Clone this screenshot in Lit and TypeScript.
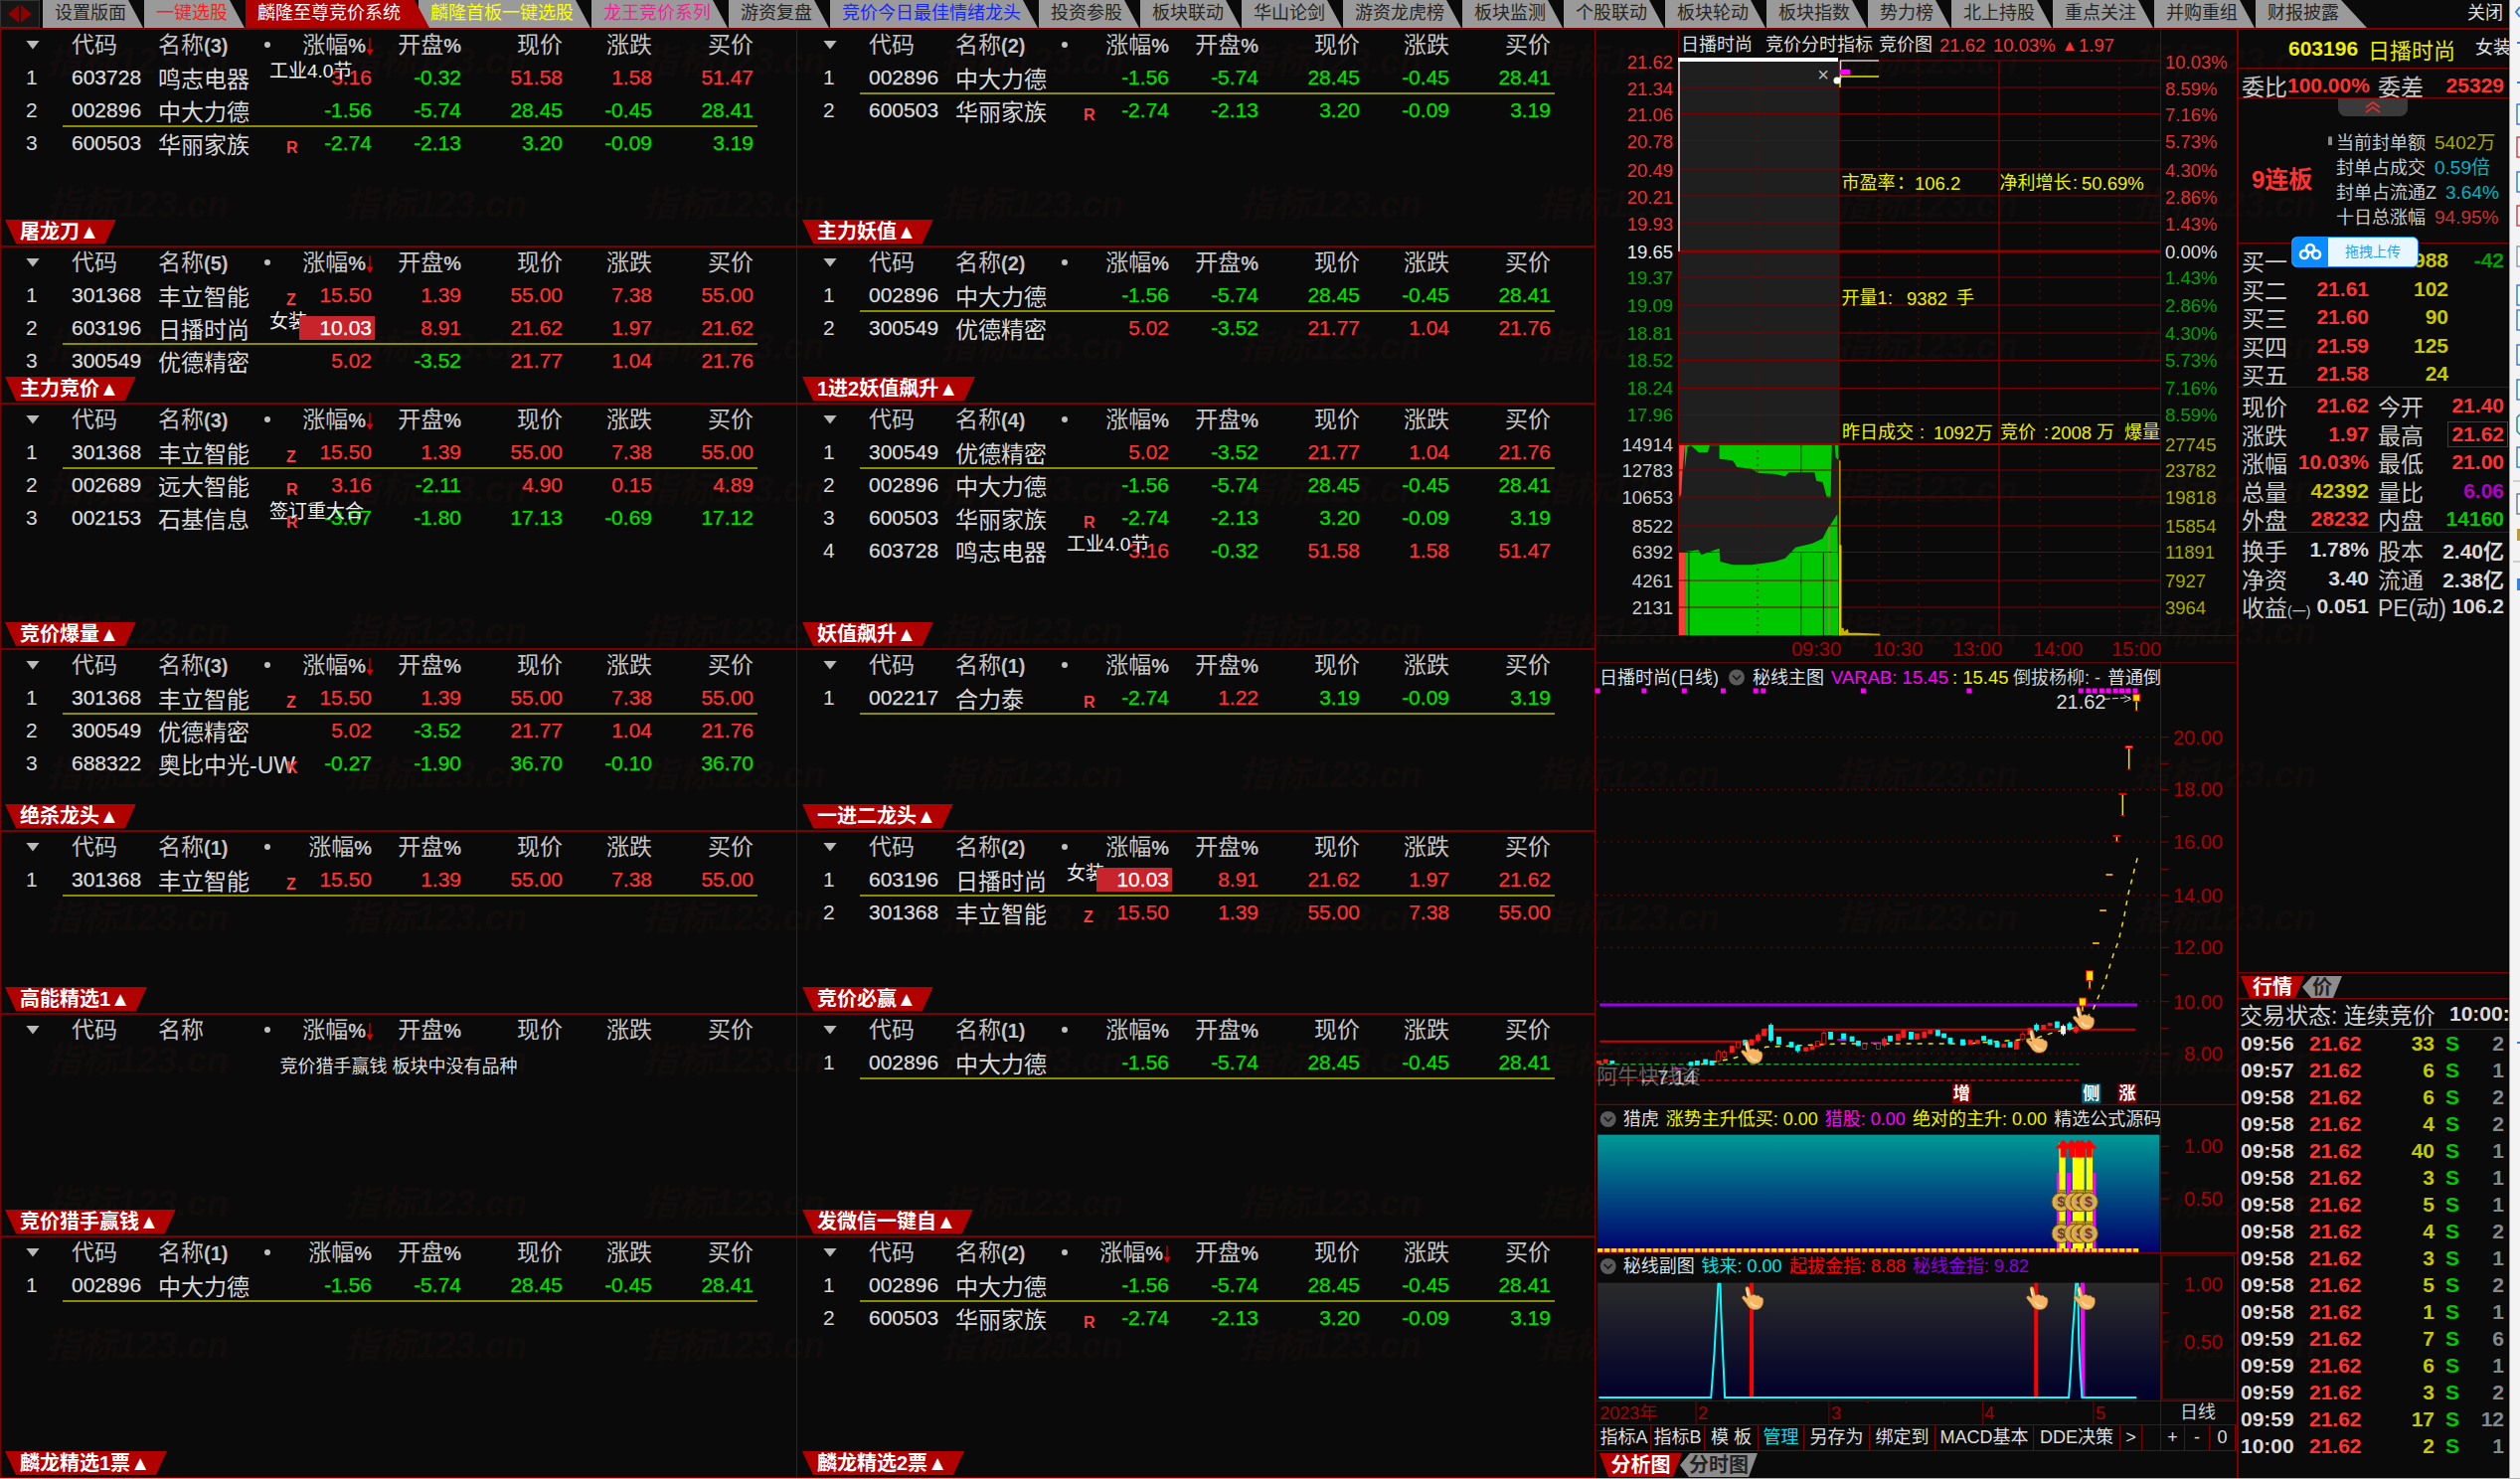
import { LitElement, css, html, svg } from 'lit';
import { customElement } from 'lit/decorators.js';

interface Stock {
  code: string;
  name: string;
  pct: string;
  open: string;
  price: string;
  chg: string;
  buy: string;
  flag?: string;
  over?: string;
  hot?: boolean;
}

const s = (code: string, name: string, pct: string, open: string, price: string, chg: string, buy: string, extra: Partial<Stock> = {}): Stock =>
  ({ code, name, pct, open, price, chg, buy, ...extra });

const MZ = s('603728', '鸣志电器', '3.16', '-0.32', '51.58', '1.58', '51.47', { over: '工业4.0节' });
const ZD = s('002896', '中大力德', '-1.56', '-5.74', '28.45', '-0.45', '28.41');
const HL = s('600503', '华丽家族', '-2.74', '-2.13', '3.20', '-0.09', '3.19', { flag: 'R' });
const FL = s('301368', '丰立智能', '15.50', '1.39', '55.00', '7.38', '55.00', { flag: 'Z' });
const RB = s('603196', '日播时尚', '10.03', '8.91', '21.62', '1.97', '21.62', { over: '女装', hot: true });
const YD = s('300549', '优德精密', '5.02', '-3.52', '21.77', '1.04', '21.76');
const YDA = s('002689', '远大智能', '3.16', '-2.11', '4.90', '0.15', '4.89', { flag: 'R' });
const SJ = s('002153', '石基信息', '-3.07', '-1.80', '17.13', '-0.69', '17.12', { flag: 'R', over: '签订重大合' });
const AB = s('688322', '奥比中光-UW', '-0.27', '-1.90', '36.70', '-0.10', '36.70', { flag: 'K' });
const HLT = s('002217', '合力泰', '-2.74', '1.22', '3.19', '-0.09', '3.19', { flag: 'R' });

interface Panel {
  title: string;
  count: string;
  arrow: boolean;
  rows: Stock[];
  mark: number;
  msg?: string;
}

// left and right column alternate, row by row
const PANELS: Panel[] = [
  { title: '屠龙刀', count: '(3)', arrow: true, rows: [MZ, ZD, HL], mark: 1 },
  { title: '主力妖值', count: '(2)', arrow: false, rows: [ZD, HL], mark: 0 },
  { title: '主力竞价', count: '(5)', arrow: true, rows: [FL, RB, YD], mark: 1 },
  { title: '1进2妖值飙升', count: '(2)', arrow: false, rows: [ZD, YD], mark: 0 },
  { title: '竞价爆量', count: '(3)', arrow: true, rows: [FL, YDA, SJ], mark: 0 },
  { title: '妖值飙升', count: '(4)', arrow: false, rows: [YD, ZD, HL, MZ], mark: 0 },
  { title: '绝杀龙头', count: '(3)', arrow: true, rows: [FL, YD, AB], mark: 0 },
  { title: '一进二龙头', count: '(1)', arrow: false, rows: [HLT], mark: 0 },
  { title: '高能精选1', count: '(1)', arrow: false, rows: [FL], mark: 0 },
  { title: '竞价必赢', count: '(2)', arrow: false, rows: [RB, FL], mark: 0 },
  { title: '竞价猎手赢钱', count: '', arrow: true, rows: [], mark: -1, msg: '竞价猎手赢钱 板块中没有品种' },
  { title: '发微信一键自', count: '(1)', arrow: false, rows: [ZD], mark: 0 },
  { title: '麟龙精选1票', count: '(1)', arrow: false, rows: [ZD], mark: 0 },
  { title: '麟龙精选2票', count: '(2)', arrow: true, rows: [ZD, HL], mark: 0 },
];

const TABS: [string, string][] = [
  ['设置版面', ''], ['一键选股', 'red'], ['麟隆至尊竞价系统', 'on'], ['麟隆首板一键选股', 'yel'], ['龙王竞价系列', 'pink'],
  ['游资复盘', ''], ['竞价今日最佳情绪龙头', 'blue'], ['投资参股', ''], ['板块联动', ''], ['华山论剑', ''], ['游资龙虎榜', ''],
  ['板块监测', ''], ['个股联动', ''], ['板块轮动', ''], ['板块指数', ''], ['势力榜', ''], ['北上持股', ''], ['重点关注', ''],
  ['并购重组', ''], ['财报披露', 'last'],
];

const R = '#ff3232';
const G = '#00a000';
const Y = '#f0f000';
const GRID = '#7c0000';
const AXR = '#a80000';

const ln = (x1: number, y1: number, x2: number, y2: number, c = GRID, w = 1, dash = '') =>
  svg`<line x1=${x1} y1=${y1} x2=${x2} y2=${y2} stroke=${c} stroke-width=${w} stroke-dasharray=${dash}></line>`;
const tx = (x: number, y: number, t: string, fill = '#ccc', anchor = 'start', size = 18.5, weight = 400) =>
  svg`<text x=${x} y=${y} fill=${fill} text-anchor=${anchor} font-size=${size} font-weight=${weight} dominant-baseline="central">${t}</text>`;

const chevron = (x: number, y: number) => svg`
  <circle cx=${x} cy=${y} r="8" fill="#5a5a5a"></circle>
  <path d="M${x - 4} ${y - 2}l4 4l4 -4" fill="none" stroke="#161616" stroke-width="1.6"></path>`;

const hand = (x: number, y: number) => svg`
  <g transform="translate(${x} ${y})">
    <path d="M-7 -10C-7.5 -13 -3.5 -13 -3 -10L-1.5 -3.5C1.5 -5 3 -4 4 -3C6 -4 7 -3 8 -1.500C10 -2 11 0 11 2C11 7 8 11 3 11C-1 11 -4 9 -6 5L-10 0C-11.500 -2 -9 -4 -7 -2L-5 -0.500Z"
      fill="#f5b562" stroke="#8a5a1c" stroke-width="0.6"></path>
    <path d="M-6 -10L-4.500 -3" stroke="#fff2d8" stroke-width="1.4"></path>
    <path d="M-2 3C0 7 3 8 6 7" fill="none" stroke="#fbd9a4" stroke-width="2"></path>
  </g>`;

const bag = (x: number, y: number) => svg`
  <g transform="translate(${x} ${y})">
    <path d="M-4 -11L4 -11L2 -6L-2 -6Z" fill="#c89a30" stroke="#6b5212" stroke-width="0.7"></path>
    <circle cx="0" cy="1" r="9.500" fill="#e0b040" stroke="#6b5212" stroke-width="1"></circle>
    <circle cx="0" cy="1" r="6" fill="#c8a078"></circle>
    ${tx(0, 1, '$', '#6b3a20', 'middle', 14, 700)}
  </g>`;

const rocket = (x: number) => svg`
  <path d="M${x} 1146.500l8 9h-5v9h-6v-9h-5z" fill="#ff0000"></path>`;

// zoom-read coordinates of the candle row in the daily chart
const CANDLES: [number, number, number, string][] = [
  [20, 1222, 1230, 'r'], [36, 1218, 1228, 'r'], [52, 1222, 1230, 'c'], [240, 1226, 1236, 'c'], [255, 1222, 1234, 'c'], [275, 1218, 1232, 'c'],
  [290, 1222, 1234, 'c'], [306, 1188, 1228, 'h'], [320, 1190, 1216, 'h'], [338, 1178, 1196, 'r'], [353, 1165, 1182, 'h'], [370, 1160, 1174, 'c'],
  [385, 1158, 1174, 'r'], [400, 1138, 1166, 'r'], [415, 1126, 1146, 'r'], [431, 1108, 1166, 'C'], [450, 1150, 1172, 'c'], [480, 1166, 1180, 'c'],
  [495, 1172, 1197, 'c'], [515, 1182, 1192, 'r'], [530, 1178, 1188, 'r'], [543, 1163, 1178, 'h'], [558, 1132, 1176, 'h'], [574, 1135, 1156, 'c'],
  [605, 1140, 1160, 'C'], [625, 1149, 1163, 'c'], [640, 1162, 1176, 'c'], [655, 1170, 1186, 'h'], [688, 1168, 1186, 'h'], [702, 1150, 1180, 'r'],
  [716, 1147, 1162, 'c'], [735, 1142, 1160, 'r'], [748, 1130, 1152, 'r'], [766, 1135, 1156, 'C'], [780, 1140, 1156, 'r'], [798, 1135, 1152, 'r'],
  [812, 1130, 1140, 'r'], [830, 1130, 1146, 'c'], [845, 1140, 1152, 'c'], [860, 1153, 1170, 'c'], [890, 1158, 1174, 'c'], [908, 1160, 1172, 'r'],
  [925, 1160, 1170, 'r'], [940, 1148, 1160, 'c'], [955, 1158, 1172, 'c'], [972, 1166, 1180, 'c'], [988, 1172, 1180, 'r'], [1003, 1166, 1180, 'c'],
  [1018, 1163, 1186, 'r'], [1033, 1135, 1162, 'h'], [1050, 1124, 1142, 'r'], [1066, 1108, 1134, 'c'], [1083, 1114, 1126, 'r'], [1098, 1108, 1116, 'r'],
  [1115, 1104, 1122, 'c'], [1130, 1112, 1146, 'w'], [1145, 1104, 1132, 'c'], [1160, 1114, 1140, 'r'],
];

const kx = (z: number) => 1600 + z / 2.376;
const ky = (z: number) => 660 + z / 3;
const lx = (z: number) => 1600 + z / 2.376;
const ly = (z: number) => 1110 + z / 3;

const candle = ([x, top, bot, kind]: [number, number, number, string]) => {
  const px = kx(x);
  const t = ky(top);
  const b = ky(bot);
  const col = kind === 'c' || kind === 'C' ? '#00ffff' : kind === 'w' ? '#dff' : '#ff1a1a';
  const inset = (b - t) > 8 ? 2 : 0;
  return svg`
    ${ln(px, t, px, b, col, 1)}
    <rect x=${px - 2} y=${t + inset} width="4" height=${b - t - inset * 2} fill=${kind === 'h' ? '#0a0a0a' : col} stroke=${col} stroke-width="0.8"></rect>`;
};

const yBar = (x: number, top: number, bot: number, body: number) => svg`
  ${ln(kx(x), ky(top), kx(x), ky(bot), '#ffe000', 1.5)}
  <rect x=${kx(x) - 3.5} y=${ky(top)} width="7" height=${body} fill="#ffe000" stroke="#e00000" stroke-width="1"></rect>
  ${ln(kx(x) - 2, ky(bot), kx(x) + 2, ky(bot), '#e00000', 1)}`;

const pts = (arr: number[][], fx: (n: number) => number, fy: (n: number) => number) =>
  arr.map(([x, y]) => `${fx(x).toFixed(1)},${fy(y).toFixed(1)}`).join(' ');

const ix = (z: number) => 1600 + z / 2.376;
const iy = (z: number) => 360 + z / 3;

function intraday() {
  const upper: [number, string, string][] = [
    [61, '21.62', '10.03%'], [88, '21.34', '8.59%'], [114.5, '21.06', '7.16%'], [141.5, '20.78', '5.73%'],
    [170, '20.49', '4.30%'], [197, '20.21', '2.86%'], [224, '19.93', '1.43%'],
  ];
  const lower: [number, string, string][] = [
    [279, '19.37', '1.43%'], [307, '19.09', '2.86%'], [335, '18.81', '4.30%'], [362.5, '18.52', '5.73%'], [390.5, '18.24', '7.16%'], [417.5, '17.96', '8.59%'],
  ];
  const vols: [number, string, string][] = [
    [473, '12783', '23782'], [500, '10653', '19818'], [529, '8522', '15854'], [555.5, '6392', '11891'], [584, '4261', '7927'], [611, '2131', '3964'],
  ];
  const greenTop = [[226, 258], [592, 258], [593, 310], [586, 300], [584, 265], [577, 262], [574, 422], [565, 422], [555, 375], [540, 372], [535, 345], [475, 345], [465, 358], [440, 350], [400, 348], [385, 335], [350, 330], [340, 310], [308, 305], [308, 265], [285, 265], [280, 285], [258, 285], [240, 265], [232, 268], [225, 340]];
  const greenBot = [[226, 585], [258, 580], [265, 595], [285, 585], [308, 575], [310, 615], [340, 625], [385, 625], [440, 615], [465, 605], [490, 572], [530, 560], [555, 545], [565, 520], [590, 472], [594, 838], [226, 838]];
  return html`<svg class="pane" width="646" height="637" viewBox="1604 30 646 637">
    <rect x="1688" y="61" width="162" height="578" fill="#1f1f1f"></rect>
    <polygon points=${pts(greenTop, ix, iy)} fill="#00c800"></polygon>
    <polygon points=${pts(greenBot, ix, iy)} fill="#00c800"></polygon>
    <polygon points=${pts([[212, 258], [226, 258], [220, 340], [217, 410], [212, 425]], ix, iy)} fill="#ff3c3c"></polygon>
    <rect x="1689" y="556" width="6" height="83" fill="#ff3c3c"></rect>
    ${[235, 503, 557].map((x) => ln(ix(x), iy(585), ix(x), iy(838), '#0a3a0a', 1.2))}
    ${ln(ix(503), iy(258), ix(503), iy(345), '#0a3a0a', 1.2)}
    ${ln(ix(570), iy(510), ix(570), iy(838), '#d86060', 1.2)}
    ${ln(1604.5, 30, 1604.5, 667)}
    ${ln(1688.5, 30, 1688.5, 639)}
    ${ln(2173.5, 30, 2173.5, 639)}
    ${ln(1850, 61, 1850, 639)}
    ${ln(2011, 61, 2011, 639, GRID, 1.5)}
    ${[1768, 1890, 1930, 2052, 2132].map((x) => ln(x, 61, x, 639, GRID, 1, '2 5'))}
    ${[...upper, ...lower, ...vols].map(([y]) => ln(1688, y, 2173, y))}
    ${ln(1688, 253, 2173, 253, '#8c0000', 3)}
    ${ln(1688, 447, 2173, 447, '#a00000', 2)}
    ${ln(1604, 639.5, 2250, 639.5)}
    ${ln(1604, 667, 2250, 667, GRID, 1.5)}
    ${ln(ix(596), iy(310), ix(596), iy(838), '#c8a000', 1.5)}
    ${ln(ix(597), iy(565), ix(597), iy(838), '#e0c800', 2.5)}
    <polygon points=${pts([[597, 838], [597, 815], [605, 815], [606, 826], [615, 818], [617, 830], [640, 830], [692, 833], [692, 838]], ix, iy)} fill="#c8b400"></polygon>

    ${ln(1689, 253, 1689, 60, '#e8e8e8', 1.5)}
    ${ln(1688, 60, 1849, 60, '#fff', 4)}
    ${ln(1851.5, 61, 1851.5, 80, '#ddd', 1.5)}
    ${ln(1851, 61, 1890, 61, '#ccc', 1.5)}
    <rect x="1851" y="70" width="10" height="5" fill="#ff00ff"></rect>
    ${ln(1851, 77, 1890, 77, '#e6e600', 1.5)}
    ${ln(1851, 77, 1851, 88, '#e6e600', 1.5)}
    <circle cx="1848" cy="81" r="3.500" fill="#fff"></circle>
    ${tx(1834, 75, '×', '#bbb', 'middle', 20)}

    ${tx(1691, 45, '日播时尚', '#ddd', 'start', 18)}
    ${tx(1776, 45, '竞价分时指标', '#ddd', 'start', 18)}
    ${tx(1890, 45, '竞价图', '#ddd', 'start', 18)}
    ${tx(1951, 45, '21.62', R)}
    ${tx(2005, 45, '10.03%', R)}
    ${tx(2074, 45, '▲', R, 'start', 16)}
    ${tx(2091, 45, '1.97', R)}

    ${upper.map(([y, a, b]) => svg`${tx(1683, y + 1, a, '#e83232', 'end')}${tx(2178, y + 1, b, '#e03030')}`)}
    ${tx(1683, 253, '19.65', '#e8e8e8', 'end')}
    ${tx(2178, 253, '0.00%', '#ddd')}
    ${lower.map(([y, a, b]) => svg`${tx(1683, y, a, G, 'end')}${tx(2178, y, b, G)}`)}
    ${tx(1683, 447, '14914', '#ccc', 'end')}
    ${tx(2178, 447, '27745', '#a8a800')}
    ${vols.map(([y, a, b]) => svg`${tx(1683, y, a, '#ccc', 'end')}${tx(2178, y, b, '#a8a800')}`)}

    ${tx(1852.5, 184, '市盈率', Y, 'start', 18)}
    ${tx(1908, 184, '：', Y, 'start', 18)}
    ${tx(1926, 184, '106.2', Y)}
    ${tx(2011.5, 184, '净利增长', Y, 'start', 18)}
    ${tx(2085, 184, ':', Y, 'start', 18)}
    ${tx(2094, 184, '50.69%', Y)}
    ${tx(1852.5, 300, '开量1', Y, 'start', 18)}
    ${tx(1899, 300, ':', Y, 'start', 18)}
    ${tx(1918, 300, '9382', Y)}
    ${tx(1968, 300, '手', Y, 'start', 18)}
    ${tx(1853, 435, '昨日成交', Y, 'start', 18)}
    ${tx(1931, 435, ':', Y, 'start', 18)}
    ${tx(1945, 435, '1092万', Y)}
    ${tx(2012, 435, '竞价', Y, 'start', 18)}
    ${tx(2056, 435, ':', Y, 'start', 18)}
    ${tx(2063, 435, '2008', Y)}
    ${tx(2109, 435, '万', Y, 'start', 18)}
    ${tx(2137, 435, '爆量', Y, 'start', 18)}

    ${[['09:30', 1802], ['10:30', 1884], ['13:00', 1964], ['14:00', 2045], ['15:00', 2124]].map(([t, x]) => tx(x as number, 652.5, t as string, '#a80000', 'start', 20))}
  </svg>`;
}

function daily() {
  const grid: [number, string][] = [[245, '20.00'], [403, '18.00'], [561, '16.00'], [722, '14.00'], [880, '12.00'], [1043, '10.00'], [1200, '8.00']];
  const ticks = [245, 325, 403, 485, 561, 643, 722, 803, 880, 962, 1043, 1123, 1200];
  const squares = [17, 128, 224, 317, 395, 413, 652, 905, 1172, 1190, 1205, 1222, 1238, 1255, 1270, 1285, 1302];
  const curve = [[1307, 610], [1295, 670], [1285, 720], [1275, 790], [1262, 860], [1250, 900], [1240, 940], [1228, 990], [1215, 1025], [1200, 1070], [1165, 1120], [1110, 1135], [1060, 1155], [900, 1170], [600, 1170], [420, 1180], [340, 1215], [250, 1235]];
  return html`<svg class="pane" width="646" height="445" viewBox="1604 667 646 445">
    <defs><clipPath id="kc"><rect x="1604" y="667" width="569" height="445"></rect></clipPath></defs>
    ${ln(1604.5, 667, 1604.5, 1112)}
    ${ln(2173.5, 667, 2173.5, 1112)}
    ${ln(1604, 1111.5, 2250, 1111.5, GRID, 1.5)}
    ${grid.map(([y]) => ln(1606, ky(y), 2173, ky(y), '#8c0000', 1, '2 5'))}
    ${ticks.map((y) => ln(2173, ky(y), 2182, ky(y), '#8c0000'))}
    ${grid.map(([y, t]) => tx(2236, ky(y), t, AXR, 'end', 20))}
    ${squares.map((x) => svg`<rect x=${kx(x) - 2.5} y="692.500" width="5" height="5" fill="#ff00ff"></rect>`)}
    <g clip-path="url(#kc)">
      ${tx(1609, 681.5, '日播时尚(日线)', '#ddd', 'start', 18)}
      ${chevron(1747, 681.5)}
      ${tx(1763, 681.5, '秘线主图', '#ddd', 'start', 18)}
      ${tx(1842, 681.5, 'VARAB: 15.45', '#ff00ff')}
      ${tx(1964, 681.5, ': 15.45', Y)}
      ${tx(2025, 681.5, '倒拔杨柳: -', '#ccc', 'start', 18)}
      ${tx(2120, 681.5, '普通倒拔', '#ddd', 'start', 18)}
    </g>
    ${tx(kx(1113), ky(138), '21.62', '#ddd', 'start', 20)}
    ${ln(kx(1228), ky(130), kx(1290), ky(125), '#ddd', 1, '6 2')}
    <path d="M${kx(1275)} ${ky(118)}l7 4l-7 3" fill="none" stroke="#ddd"></path>

    ${ln(kx(22), ky(1053), kx(1307), ky(1053), '#9a00f0', 3)}
    ${ln(kx(22), ky(1163), kx(395), ky(1163), '#d00000', 2)}
    ${ln(kx(415), ky(1127), kx(1303), ky(1127), '#d00000', 2)}
    ${ln(kx(20), ky(1232), kx(1168), ky(1232), '#2a9a2a', 1.5, '5 3')}
    ${ln(kx(15), ky(1281), kx(1168), ky(1281), '#d00000', 1.5, '5 3')}
    <polyline points=${pts(curve, kx, ky)} fill="none" stroke="#f0e000" stroke-width="1.5" stroke-dasharray="5 6"></polyline>
    ${CANDLES.map(candle)}
    ${ln(kx(590), ky(1158), kx(612), ky(1158), '#ff00ff', 1.5)}
    ${ln(kx(670), ky(1168), kx(695), ky(1168), '#ff00ff', 1.5)}
    ${ln(kx(195), ky(1246), kx(218), ky(1246), '#ff00ff', 1.5)}

    ${yBar(1305, 115, 165, 7)} ${yBar(1287, 272, 342, 2)} ${yBar(1272, 415, 482, 1)} ${yBar(1258, 542, 560, 1)}
    ${yBar(1193, 950, 1003, 10)} ${yBar(1176, 1032, 1072, 8)}
    ${[1240, 1225, 1208].map((x, i) => ln(kx(x - 8), ky([660, 768, 867][i]), kx(x + 8), ky([660, 768, 867][i]), '#e0a000', 2))}

    ${tx(kx(15), ky(1268), '阿牛快线资', 'rgba(170,170,170,.55)', 'start', 21)}
    ${tx(kx(112), ky(1272), '←7.14', '#bbb', 'start', 20)}
    ${hand(kx(385), ky(1198))} ${hand(kx(1066), ky(1165))} ${hand(kx(1178), ky(1095))}

    ${[[887, '增', '#7a0000'], [1197, '侧', '#00607a'], [1283, '涨', '#7a0000']].map(([x, t, c]) => svg`
      <rect x=${kx(x as number) - 9.5} y=${ky(1321) - 10} width="19" height="20" fill=${c as string}></rect>
      ${tx(kx(x as number), ky(1321), t as string, '#fff', 'middle', 17, 700)}`)}
  </svg>`;
}

function hunter() {
  const yel: [number, number][] = [[1120, 1135], [1152, 1180], [1185, 1200]];
  const mag: [number, number][] = [[1114, 1120], [1138, 1148], [1200, 1208]];
  return html`<svg class="pane" width="646" height="149" viewBox="1604 1112 646 149">
    <defs>
      <linearGradient id="hg" x1="0" y1="0" x2="0" y2="1"><stop offset="0" stop-color="#009a96"></stop><stop offset="1" stop-color="#00006e"></stop></linearGradient>
      <clipPath id="hc"><rect x="1604" y="1112" width="569" height="30"></rect></clipPath>
    </defs>
    ${ln(1604.5, 1112, 1604.5, 1261)}
    ${ln(2173.5, 1112, 2173.5, 1261)}
    <rect x=${lx(17)} y=${ly(95)} width=${lx(1360) - lx(17)} height=${ly(450) - ly(95)} fill="url(#hg)"></rect>
    <g clip-path="url(#hc)">
      ${chevron(lx(42), 1126)}
      ${tx(lx(78), 1126, '猎虎', '#ddd', 'start', 18)}
      ${tx(lx(180), 1126, '涨势主升低买: 0.00', Y, 'start', 18)}
      ${tx(lx(560), 1126, '猎股: 0.00', '#ff00ff', 'start', 18)}
      ${tx(lx(770), 1126, '绝对的主升: 0.00', Y, 'start', 18)}
      ${tx(lx(1108), 1126, '精选公式源码', '#ddd', 'start', 18)}
    </g>
    ${mag.map(([a, b]) => svg`<rect x=${lx(a)} y=${ly(210)} width=${lx(b) - lx(a)} height=${ly(450) - ly(210)} fill="#ff00ff"></rect>`)}
    ${yel.map(([a, b]) => svg`<rect x=${lx(a)} y=${ly(120)} width=${lx(b) - lx(a)} height=${ly(450) - ly(120)} fill="#ffff00"></rect>`)}
    ${[1130, 1150, 1165, 1175, 1192].map((x) => rocket(lx(x)))}
    ${[1125, 1155, 1170, 1190].map((x) => svg`${bag(lx(x), ly(295))}${bag(lx(x), ly(390))}`)}
    ${ln(lx(17), ly(444), lx(1310), ly(444), '#d000d0', 4)}
    ${ln(lx(17), ly(444), lx(1310), ly(444), '#ffe600', 4, '5 2')}
    ${[130, 210, 288].map((y) => ln(2173, ly(y), 2182, ly(y), '#8c0000'))}
    ${tx(2236, ly(130), '1.00', AXR, 'end', 20)}
    ${tx(2236, ly(288), '0.50', AXR, 'end', 20)}
    ${ln(1604, 1260.5, 2250, 1260.5, GRID, 1.5)}
  </svg>`;
}

function secondary() {
  const cyan = [[20, 888], [288, 888], [292, 820], [296, 750], [299, 680], [302, 620], [305, 545], [310, 545], [312, 630], [315, 720], [318, 800], [321, 888], [1143, 888], [1148, 800], [1152, 700], [1157, 610], [1160, 545], [1165, 545], [1167, 720], [1170, 800], [1175, 888], [1305, 888]];
  return html`<svg class="pane" width="646" height="148" viewBox="1604 1261 646 148">
    <defs><linearGradient id="sg" x1="0" y1="0" x2="0" y2="1"><stop offset="0" stop-color="#2a2a2a"></stop><stop offset="1" stop-color="#00002a"></stop></linearGradient></defs>
    ${ln(1604.5, 1261, 1604.5, 1409)}
    <rect x=${lx(17)} y=${ly(542)} width=${lx(1360) - lx(17)} height=${ly(893) - ly(542)} fill="url(#sg)"></rect>
    <rect x="2174.500" y="1263" width="73" height="145" fill="none" stroke=${GRID} stroke-width="1"></rect>
    ${ln(2173.5, 1261, 2173.5, 1409)}
    ${chevron(lx(42), 1274)}
    ${tx(lx(78), 1274, '秘线副图', '#ddd', 'start', 18)}
    ${tx(lx(265), 1274, '钱来: 0.00', '#00e8e8', 'start', 18)}
    ${tx(lx(475), 1274, '起拔金指: 8.88', '#ff0000', 'start', 18)}
    ${tx(lx(770), 1274, '秘线金指: 9.82', '#8a00e0', 'start', 18)}
    ${[385, 1065].map((x) => ln(lx(x), ly(542), lx(x), ly(888), '#ff0000', 4))}
    ${ln(lx(1176), ly(542), lx(1176), ly(888), '#ff00ff', 4)}
    <polyline points=${pts(cyan, lx, ly)} fill="none" stroke="#00ffff" stroke-width="2"></polyline>
    ${hand(lx(387), ly(590))} ${hand(lx(1067), ly(590))} ${hand(lx(1180), ly(590))}
    ${[545, 632, 720].map((y) => ln(2174, ly(y), 2182, ly(y), '#8c0000'))}
    ${tx(2236, ly(545), '1.00', AXR, 'end', 20)}
    ${tx(2236, ly(720), '0.50', AXR, 'end', 20)}
  </svg>`;
}

function dateAxis() {
  const marks: [number, string][] = [[252, '2'], [570, '3'], [937, '4'], [1202, '5']];
  return html`<svg class="pane" width="646" height="24" viewBox="1604 1409 646 24">
    ${ln(1604.5, 1409, 1604.5, 1433)}
    ${ln(2173.5, 1409, 2173.5, 1433)}
    ${ln(1604, 1409.5, 2250, 1409.5, GRID, 1)}
    ${tx(lx(22), 1422, '2023年', AXR, 'start', 18)}
    ${marks.map(([x, t]) => svg`${ln(lx(x), 1409, lx(x), 1433)}${tx(lx(x) + 2, 1422, t, AXR, 'start', 18)}`)}
    ${[330, 412, 492, 662, 755, 845, 1005, 1072, 1137, 1300].map((x) => ln(lx(x), 1409, lx(x), 1412))}
    ${tx(2211, 1421, '日线', '#ccc', 'middle', 18)}
  </svg>`;
}

function iconStrip() {
  const ys: [number, string][] = [[105, '#3a7fe0'], [138, '#e04040'], [173, '#3a7fe0'], [207, '#e04040'], [248, '#8aa0c0'], [287, '#3a7fe0'], [312, '#3a7fe0'], [347, '#3a7fe0'], [382, '#3a7fe0'], [450, '#3a7fe0'], [497, '#6a80a0']];
  return html`<svg class="strip" width="11" height="1488" viewBox="0 0 11 1488">
    <rect x="0" y="0" width="11" height="1488" fill="#f3f3f3"></rect>
    ${ln(0.5, 0, 0.5, 1488, '#9a9a9a')}
    <path d="M11 7L7 12L11 17" fill="none" stroke="#3a7fe0" stroke-width="2"></path>
    ${[43, 83, 1049].map((y) => ln(8, y, 11, y, '#3a7fe0', 2))}
    ${ys.map(([y, c]) => svg`<rect x="8" y=${y} width="8" height="20" fill="#fff" stroke=${c} stroke-width="1.500"></rect>`)}
    <path d="M11 417L8 420V434L11 437" fill="none" stroke="#20908a" stroke-width="1.500"></path>
    ${ln(4, 484, 11, 484, '#aaa')}
    ${ln(4, 565, 11, 565, '#aaa')}
    <rect x="8" y="532" width="4" height="12" fill="#b89a40"></rect>
    <rect x="8" y="582" width="4" height="12" fill="#3a7fe0"></rect>
  </svg>`;
}

@customElement('app-root')
export class AppRoot extends LitElement {
  private cls(v: string) {
    return v.startsWith('-') ? 'dn' : 'up';
  }

  private renderRow(st: Stock, i: number, mark: boolean) {
    const c = this.cls(st.chg);
    return html`<div class="row ${mark ? 'mark' : ''}">
      <span class="idx">${i + 1}</span>
      <span class="code">${st.code}</span>
      <span class="name">${st.name}
        ${st.flag ? html`<i class="flag">${st.flag}</i>` : ''}
      </span>
      <span class="num ${st.hot ? 'hot' : this.cls(st.pct)}">${st.pct}</span>
      <span class="num ${this.cls(st.open)}">${st.open}</span>
      <span class="num ${c}">${st.price}</span>
      <span class="num ${c}">${st.chg}</span>
      <span class="num ${c}">${st.buy}</span>
      ${st.over ? html`<i class="over">${st.over}</i>` : ''}
    </div>`;
  }

  private renderPanel(p: Panel, i: number) {
    return html`<section class="panel ${i % 2 ? 'even' : ''}">
      <div class="row head">
        <span class="idx"><i class="tri"></i></span>
        <span>代码</span>
        <span class="hname">名称<b>${p.count}</b><i class="dot"></i></span>
        <span class="r ${p.arrow ? 'sorted' : ''}">涨幅<b>%</b>${p.arrow
          ? html`<svg class="sort" width="8" height="18" viewBox="0 0 8 18"><path d="M4 0V14" stroke="#e00000" stroke-width="1.200"></path><path d="M0.500 11.500H7.500L4 18Z" fill="#e00000"></path></svg>`
          : ''}</span>
        <span class="r">开盘<b>%</b></span>
        <span class="r">现价</span>
        <span class="r">涨跌</span>
        <span class="r">买价</span>
      </div>
      ${p.msg ? html`<div class="msg">${p.msg}</div>` : ''}
      ${p.rows.map((st, n) => this.renderRow(st, n, n === p.mark))}
      <div class="ribbon">${p.title}▲</div>
    </section>`;
  }

  private renderSide() {
    const buys = [['买一', '21.62', '1988', '-42'], ['买二', '21.61', '102', ''], ['买三', '21.60', '90', ''], ['买四', '21.59', '125', ''], ['买五', '21.58', '24', '']];
    const ticks = [['09:56', '33', '2'], ['09:57', '6', '1'], ['09:58', '6', '2'], ['09:58', '4', '2'], ['09:58', '40', '1'], ['09:58', '3', '1'], ['09:58', '5', '1'], ['09:58', '4', '2'], ['09:58', '3', '1'], ['09:58', '5', '2'], ['09:58', '1', '1'], ['09:59', '7', '6'], ['09:59', '6', '1'], ['09:59', '3', '2'], ['09:59', '17', '12'], ['10:00', '2', '1']];
    return html`<aside class="side">
      <div class="s-title"><b>603196</b><span>日播时尚</span><i>女装</i></div>
      <div class="kv s-wei"><span>委比</span><b class="up">100.00%</b><span class="l2">委差</span><b class="up">25329</b></div>
      <div class="s-seal">
        <div class="pill"><svg width="16" height="12" viewBox="0 0 16 12"><path d="M1 6L8 1L15 6M1 11L8 6L15 11" fill="none" stroke="#e03030" stroke-width="1.600"></path></svg></div>
        <div class="seal-body">
          <div class="lianban"><b>9</b>连板</div>
          <div class="seal-list">
            <div><i class="pin"></i>当前封单额 <em class="ye">5402万</em></div>
            <div>封单占成交 <em class="cy">0.59倍</em></div>
            <div>封单占流通Z <em class="cy">3.64%</em></div>
            <div>十日总涨幅 <em class="dr">94.95%</em></div>
          </div>
        </div>
      </div>
      <div class="s-buy">
        ${buys.map(([a, b, c, d]) => html`<div class="buy"><span>${a}</span><b class="up">${b}</b><b class="ye">${c}</b><b class="gn">${d}</b></div>`)}
      </div>
      <div class="s-stat">
        <div class="kv"><span>现价</span><b class="up">21.62</b><span class="l2">今开</span><b class="up">21.40</b></div>
        <div class="kv"><span>涨跌</span><b class="up">1.97</b><span class="l2">最高</span><b class="up boxed">21.62</b></div>
        <div class="kv"><span>涨幅</span><b class="up">10.03%</b><span class="l2">最低</span><b class="up">21.00</b></div>
        <div class="kv"><span>总量</span><b class="ye">42392</b><span class="l2">量比</span><b class="pu">6.06</b></div>
        <div class="kv"><span>外盘</span><b class="up">28232</b><span class="l2">内盘</span><b class="gn2">14160</b></div>
      </div>
      <div class="s-fin">
        <div class="kv"><span>换手</span><b>1.78%</b><span class="l2">股本</span><b>2.40亿</b></div>
        <div class="kv"><span>净资</span><b>3.40</b><span class="l2">流通</span><b>2.38亿</b></div>
        <div class="kv"><span>收益<small>(一)</small></span><b>0.051</b><span class="l2">PE(动)</span><b>106.2</b></div>
      </div>
      <div class="s-tabs"><span class="trap on">行情</span><span class="trap off">价</span></div>
      <div class="s-status"><span>交易状态: 连续竞价</span><b>10:00:</b></div>
      <div class="s-ticks">
        ${ticks.map(([t, q, n]) => html`<div class="tick"><b>${t}</b><b class="up">21.62</b><b class="ye">${q}</b><b class="gn2 sell">S</b><b class="gy">${n}</b></div>`)}
      </div>
      <div class="upload">
        <span class="u-logo"><svg width="26" height="18" viewBox="0 0 26 18"><g fill="none" stroke="#fff" stroke-width="2.600"><circle cx="7" cy="12" r="4"></circle><circle cx="13" cy="6" r="4"></circle><circle cx="19" cy="12" r="4"></circle></g></svg></span>
        <span class="u-text">拖拽上传</span>
      </div>
    </aside>`;
  }

  render() {
    const tools: [string, number, string][] = [
      ['指标A', 54, ''], ['指标B', 54, ''], ['模 板', 54, ''], ['管理', 46, 'cy2'], ['另存为', 66, ''], ['绑定到', 66, ''], ['MACD基本', 99, ''], ['DDE决策', 87, ''],
      ['>', 22, ''], ['', 19, ''], ['+', 24, ''], ['-', 25, ''], ['0', 26, ''],
    ];
    return html`<div class="app">
      <div class="wm">${Array.from({ length: 80 }, () => html`<span>指标123.cn</span>`)}</div>
      <div class="content">
        <header class="tabs">
          <div class="nav"><i class="nl"></i><i class="nr"></i></div>
          ${TABS.map(([t, c]) => html`<span class="tab ${c}">${t}</span>`)}
          <span class="close">关闭</span>
        </header>
        <div class="main">
          <div class="board">${PANELS.map((p, i) => this.renderPanel(p, i))}</div>
          <div class="charts">
            ${intraday()} ${daily()} ${hunter()} ${secondary()} ${dateAxis()}
            <div class="tools">
              ${tools.map(([t, w, c]) => html`<span class="tool ${c}" style="width:${w}px">${t}</span>`)}
            </div>
            <div class="c-tabs"><span class="trap on big">分析图</span><span class="trap off big">分时图</span></div>
          </div>
          ${this.renderSide()}
        </div>
      </div>
      ${iconStrip()}
      <i class="edge"></i>
    </div>`;
  }

  static styles = css`
    :host {
      display: block;
      width: 2535px;
      height: 1488px;
      font-family: 'Liberation Sans', 'Noto Sans CJK SC', sans-serif;
      color: #ccc;
    }

    .app {
      position: relative;
      display: flex;
      width: 2535px;
      height: 1488px;
      overflow: hidden;
      background: #0a0a0a;
    }

    .edge {
      position: absolute;
      left: 0;
      right: 0;
      bottom: 0;
      height: 1px;
      background: #b0b0b0;
    }

    text {
      font-family: 'Liberation Sans', 'Noto Sans CJK SC', sans-serif;
    }

    .pane,
    .strip {
      display: block;
      flex: none;
    }

    .strip {
      position: relative;
    }

    .wm {
      position: absolute;
      left: 46px;
      top: 32px;
      display: grid;
      grid-template-columns: repeat(8, 300px);
      grid-auto-rows: 143.6px;
      pointer-events: none;
    }

    .wm span {
      font-size: 36px;
      font-weight: 700;
      font-style: italic;
      color: #120d0d;
      white-space: nowrap;
    }

    .content {
      position: relative;
      width: 2524px;
    }

    /* top tab bar */
    .tabs {
      display: flex;
      height: 30px;
      box-sizing: border-box;
      border-bottom: 2px solid #800000;
      font-size: 18px;
    }

    .nav {
      display: flex;
      align-items: center;
      justify-content: center;
      gap: 2px;
      width: 40px;
      margin-right: 2px;
      box-sizing: border-box;
      background: #161616;
      border: 1px solid #333;
    }

    .nl,
    .nr {
      width: 0;
      height: 0;
      border-top: 9px solid transparent;
      border-bottom: 9px solid transparent;
    }

    .nl {
      border-right: 11px solid #8c0000;
    }

    .nr {
      border-left: 11px solid #8c0000;
    }

    .tab {
      box-sizing: border-box;
      height: 28px;
      line-height: 27px;
      padding: 0 17px 0 13px;
      background: #9a9a9a;
      color: #262626;
      white-space: nowrap;
      clip-path: polygon(0 0, calc(100% - 15px) 0, 100% 100%, 1px 100%, 1px 0);
    }

    .tab.red {
      color: #ff1c1c;
    }

    .tab.yel {
      color: #ffff00;
    }

    .tab.pink {
      color: #ff1a9c;
    }

    .tab.blue {
      color: #1428ff;
    }

    .tab.on {
      position: relative;
      z-index: 1;
      margin-right: -12px;
      padding-right: 29px;
      background: #b00000;
      color: #fff;
    }

    .tab.last {
      padding-right: 28px;
      clip-path: polygon(0 0, calc(100% - 26px) 0, 100% 100%, 1px 100%, 1px 0);
    }

    .close {
      margin-left: auto;
      margin-right: 6px;
      line-height: 26px;
      color: #ddd;
    }

    .main {
      display: grid;
      grid-template-columns: 1604px 646px 274px;
      height: 1458px;
    }

    .board {
      display: grid;
      grid-template-columns: 801px 803px;
      grid-template-rows: 219px 158px 247px 183px 184px 224px 243px;
    }

    /* stock panels */
    .panel {
      position: relative;
      display: flex;
      flex-direction: column;
      box-sizing: border-box;
      border-left: 1px solid #800000;
      border-bottom: 2px solid #7a0000;
      overflow: hidden;
    }

    .panel.even {
      padding-left: 1px;
    }

    .row {
      position: relative;
      display: grid;
      grid-template-columns: 71px 87px 140px 75px 90px 102px 90px 102px;
      grid-template-rows: 100%;
      flex: none;
      align-items: center;
      height: 33px;
      font-size: 21px;
      white-space: nowrap;
    }

    .row.head {
      box-sizing: border-box;
      height: 31px;
      padding-bottom: 1px;
      font-size: 23px;
      line-height: 24px;
      color: #c4c4c4;
    }

    .head b {
      font-weight: 700;
      font-size: 20px;
    }

    .row.mark::after {
      content: '';
      position: absolute;
      left: 62px;
      width: 699px;
      bottom: -1px;
      height: 2px;
      background: #8c8c00;
    }

    .idx {
      padding-left: 25px;
      color: #d8d8d8;
    }

    .tri {
      display: block;
      width: 14px;
      height: 9px;
      background: #b8b8b8;
      clip-path: polygon(0 0, 100% 0, 50% 100%);
    }

    .code {
      color: #dcdcdc;
      -webkit-text-stroke: 0.25px #dcdcdc;
    }

    .name {
      position: relative;
      font-size: 23px;
      color: #d8d8d8;
    }

    .hname {
      position: relative;
    }

    .dot {
      position: absolute;
      left: 107px;
      top: 50%;
      margin-top: -3px;
      width: 6px;
      height: 6px;
      border-radius: 50%;
      background: #c0c0c0;
    }

    .flag {
      position: absolute;
      left: 129px;
      top: 13px;
      font-size: 16px;
      font-style: normal;
      font-weight: 700;
      line-height: 18px;
      color: #ff3c3c;
    }

    .over {
      position: absolute;
      left: 270px;
      top: 0;
      font-size: 19px;
      font-style: normal;
      line-height: 22px;
      color: #eee;
    }

    .r {
      position: relative;
      text-align: right;
    }

    .r.sorted {
      padding-right: 6px;
    }

    .sort {
      position: absolute;
      right: -2px;
      top: 50%;
      margin-top: -7px;
    }

    .num {
      text-align: right;
      -webkit-text-stroke: 0.25px currentColor;
    }

    .up {
      color: #ff3232;
    }

    .dn {
      color: #00e000;
    }

    .hot {
      position: relative;
      z-index: 1;
      justify-self: end;
      width: 76px;
      margin-right: -3px;
      padding-right: 3px;
      box-sizing: border-box;
      height: 24px;
      line-height: 24px;
      background: #c8242c;
      color: #fff;
    }

    .msg {
      height: 42px;
      line-height: 42px;
      font-size: 18px;
      text-align: center;
      color: #ddd;
    }

    .ribbon {
      align-self: flex-start;
      flex: none;
      margin: auto 0 2px 4px;
      height: 24px;
      line-height: 24px;
      padding: 0 17px 0 15px;
      font-size: 20px;
      font-weight: 700;
      color: #fff;
      background: #b00000;
      clip-path: polygon(0 0, 100% 0, calc(100% - 11px) 100%, 11px 100%);
    }

    /* middle chart column */
    .charts {
      display: flex;
      flex-direction: column;
      width: 646px;
    }

    .tools {
      display: flex;
      box-sizing: border-box;
      height: 27px;
      padding-left: 2px;
      border-top: 1px solid #800000;
      border-bottom: 1px solid #800000;
      border-left: 1px solid #800000;
    }

    .tool {
      box-sizing: border-box;
      flex: none;
      line-height: 25px;
      text-align: center;
      font-size: 18px;
      white-space: nowrap;
      color: #ddd;
      border-right: 1px solid #800000;
    }

    .tool.cy2 {
      color: #00e0e0;
    }

    .c-tabs {
      display: flex;
      align-items: center;
      height: 28px;
      padding-left: 4px;
      border-left: 1px solid #800000;
      box-sizing: border-box;
    }

    .trap {
      display: block;
      font-weight: 700;
      text-align: center;
      clip-path: polygon(0 0, 100% 0, calc(100% - 9px) 100%, 9px 100%);
    }

    .trap.on {
      background: #b80000;
      color: #fff;
    }

    .trap.off {
      margin-left: -2px;
      background: #8c8c8c;
      color: #222;
      clip-path: polygon(9px 100%, 0 50%, 10px 0, 100% 0, calc(100% - 9px) 100%);
    }

    .trap.big {
      height: 24px;
      line-height: 24px;
      width: 83px;
      font-size: 20px;
    }

    .trap.off.big {
      width: 78px;
    }

    /* right quote column */
    .side {
      position: relative;
      display: flex;
      flex-direction: column;
      box-sizing: border-box;
      width: 274px;
      height: 1458px;
      border-left: 2px solid #800000;
      overflow: hidden;
      font-size: 23px;
    }

    .side b {
      font-size: 21px;
      font-weight: 700;
      text-align: right;
      color: #d8d8d8;
      white-space: nowrap;
    }

    .side b.up {
      color: #ff3232;
    }

    .side b.ye {
      color: #c8c800;
    }

    .side b.gn {
      color: #00a000;
    }

    .side b.gn2 {
      color: #00c800;
    }

    .side b.pu {
      color: #b000c8;
    }

    .side b.gy {
      color: #888;
    }

    .s-title {
      position: relative;
      box-sizing: border-box;
      flex: none;
      height: 39px;
      padding-left: 50px;
      display: flex;
      align-items: center;
      gap: 10px;
      border-bottom: 1px solid #800000;
      color: #e8e800;
      font-size: 22px;
    }

    .side .s-title b {
      color: #f0f000;
    }

    .s-title i {
      position: absolute;
      left: 238px;
      top: 3px;
      font-size: 18px;
      font-style: normal;
      color: #e0e0e0;
      white-space: nowrap;
    }

    .kv {
      display: grid;
      grid-template-columns: 46px 82px 46px 90px;
      align-items: center;
      padding-left: 3px;
      white-space: nowrap;
      color: #c8c8c8;
    }

    .kv small {
      font-size: 14px;
    }

    .l2 {
      margin-left: 9px;
    }

    .s-wei {
      flex: none;
      height: 30px;
      box-sizing: border-box;
      padding-bottom: 3px;
      border-bottom: 1px solid #800000;
    }

    .s-seal {
      flex: none;
      height: 146px;
      box-sizing: border-box;
      border-bottom: 1px solid #800000;
    }

    .pill {
      display: flex;
      align-items: center;
      justify-content: center;
      width: 70px;
      height: 18px;
      margin-left: 100px;
      background: #3a3a3a;
      border-radius: 0 0 8px 8px;
    }

    .seal-body {
      display: flex;
    }

    .lianban {
      flex: none;
      width: 85px;
      padding: 44px 0 0 13px;
      font-size: 24px;
      font-weight: 700;
      color: #ff3232;
      white-space: nowrap;
    }

    .side .lianban b {
      font-size: 24px;
      color: #ff3232;
    }

    .seal-list {
      padding-top: 14px;
      font-size: 18px;
      color: #c8c8c8;
      white-space: nowrap;
    }

    .seal-list div {
      position: relative;
      height: 25px;
      line-height: 25px;
    }

    .seal-list em {
      font-style: normal;
      font-size: 19px;
      margin-left: 4px;
    }

    .pin {
      position: absolute;
      left: -8px;
      top: 6px;
      width: 4px;
      height: 9px;
      background: #888;
      border-radius: 2px 2px 0 0;
    }

    .ye {
      color: #a8a800;
    }

    .cy {
      color: #00b4c8;
    }

    .dr {
      color: #c83232;
    }

    .s-buy {
      flex: none;
      height: 145px;
      box-sizing: border-box;
      border-bottom: 1px solid #800000;
    }

    .buy {
      display: grid;
      grid-template-columns: 46px 82px 80px 56px;
      align-items: center;
      height: 28.500px;
      padding-left: 3px;
      color: #c8c8c8;
    }

    .s-stat {
      flex: none;
      height: 146px;
      box-sizing: border-box;
      padding-top: 1px;
      border-bottom: 1px solid #800000;
    }

    .s-stat .kv,
    .s-fin .kv {
      height: 28.500px;
    }

    .boxed {
      justify-self: end;
      margin-right: -3px;
      padding: 0 3px;
      outline: 1px solid #3c3c3c;
      line-height: 24px;
    }

    .s-fin {
      flex: none;
      height: 443px;
      box-sizing: border-box;
      border-bottom: 1px solid #800000;
    }

    .s-tabs {
      display: flex;
      flex: none;
      height: 26px;
      box-sizing: border-box;
      padding: 3px 0 0 2px;
      border-bottom: 1px solid #800000;
    }

    .s-tabs .trap {
      height: 22px;
      line-height: 22px;
      font-size: 20px;
    }

    .s-tabs .on {
      width: 64px;
    }

    .s-tabs .off {
      width: 40px;
    }

    .s-status {
      display: flex;
      flex: none;
      align-items: center;
      height: 31px;
      box-sizing: border-box;
      padding-left: 1px;
      border-bottom: 1px solid #800000;
      font-size: 23px;
      white-space: nowrap;
      color: #d0d0d0;
    }

    .s-status span {
      flex: none;
      width: 211px;
    }

    .side .s-status b {
      flex: none;
    }

    .tick {
      display: grid;
      grid-template-columns: 69px 60px 66px 30px 40px;
      align-items: center;
      height: 27px;
      padding-left: 2px;
    }

    .tick b:nth-child(2) {
      text-align: left;
    }

    .tick b:first-child {
      text-align: left;
    }

    .side b.sell {
      padding-left: 11px;
      text-align: left;
    }

    .upload {
      position: absolute;
      left: 53px;
      top: 207.500px;
      display: flex;
      width: 128px;
      height: 31px;
      box-sizing: border-box;
      overflow: hidden;
      border: 1px solid #0a8cff;
      border-radius: 6px;
      background: #e8f6ff;
    }

    .u-logo {
      display: flex;
      align-items: center;
      justify-content: center;
      width: 36px;
      background: #0a8cff;
    }

    .u-text {
      flex: 1;
      text-align: center;
      line-height: 29px;
      font-size: 14px;
      color: #2aa0f0;
    }
  `;
}

declare global {
  interface HTMLElementTagNameMap {
    'app-root': AppRoot;
  }
}
